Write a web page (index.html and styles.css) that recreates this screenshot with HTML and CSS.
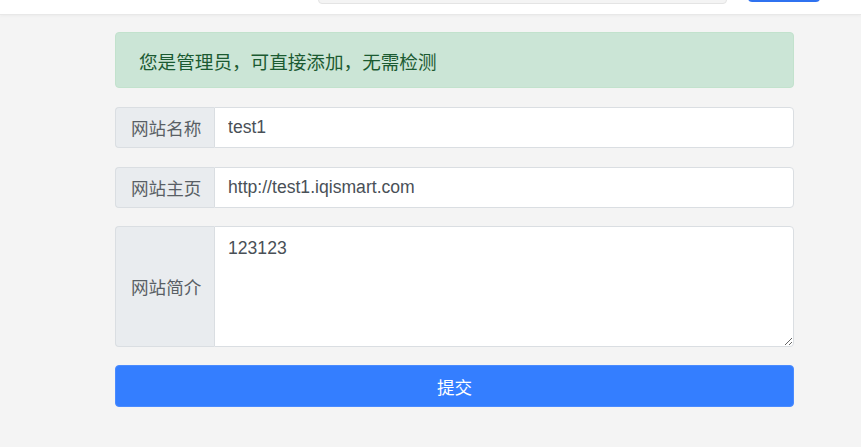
FILE: index.html
```html
<!DOCTYPE html>
<html>
<head>
  <meta charset="utf-8"/>
  <title>添加网站</title>
  <link rel="stylesheet" href="styles.css">
</head>
<body>
  <div class="topbar">
    <div class="topbar-inner">
      <div class="search-box"></div>
      <div class="search-btn"></div>
    </div>
  </div>

  <div class="page">
    <div class="alert-success">您是管理员，可直接添加，无需检测</div>

    <form id="siteForm">
      <div class="input-group">
        <span class="input-label">网站名称</span>
        <input type="text" class="form-control" value="test1">
      </div>

      <div class="input-group">
        <span class="input-label">网站主页</span>
        <input type="text" class="form-control" value="http://test1.iqismart.com">
      </div>

      <div class="input-group input-group-tall">
        <span class="input-label">网站简介</span>
        <textarea class="form-control">123123</textarea>
      </div>

      <button type="submit" class="btn-submit">提交</button>
    </form>
  </div>
</body>
</html>
```

FILE: styles.css
```css
html {
  background: #f4f4f4;
}

body {
  margin: 0;
  padding: 0;
  background: #f4f4f4;
  font-family: 'Liberation Sans', Arial, 'Noto Sans CJK SC', sans-serif;
  font-size: 17.6px;
  color: #495057;
  overflow: hidden;
}

.topbar {
  height: 14px;
  background: #fff;
  border-bottom: 1px solid #e8e8e8;
  box-shadow: 0 1px 3px rgba(0,0,0,0.04);
  overflow: hidden;
}

.topbar-inner {
  display: flex;
  align-items: flex-end;
  height: 100%;
  padding-left: 318px;
}

.search-box {
  width: 407px;
  height: 30px;
  margin-bottom: 10px;
  background: #f4f4f4;
  border: 1px solid #e4e4e4;
  border-radius: 4px;
}

.search-btn {
  width: 72px;
  height: 30px;
  margin-left: 21px;
  margin-bottom: 12px;
  background: #2f72f0;
  border-radius: 4px;
}

.page {
  width: 679px;
  margin: 17px 0 0 115px;
}

.alert-success {
  height: 56px;
  box-sizing: border-box;
  padding: 0 23px;
  display: flex;
  align-items: center;
  background: #cbe5d6;
  border: 1px solid #c2e2cd;
  border-radius: 4px;
  color: #1b5a31;
  font-size: 18.6px;
  margin-bottom: 19px;
}

.input-group {
  display: flex;
  height: 41px;
  margin-bottom: 18.5px;
}

.input-group-tall {
  height: 121px;
  margin-bottom: 18px;
}

.input-label {
  display: flex;
  align-items: center;
  width: 99px;
  box-sizing: border-box;
  padding: 0 13px 0 15px;
  background: #e9ecef;
  border: 1px solid #dadee2;
  border-right: none;
  border-radius: 4px 0 0 4px;
  color: #595f65;
  font-size: 17.6px;
  white-space: nowrap;
}

.form-control {
  flex: 1;
  min-width: 0;
  box-sizing: border-box;
  padding: 0 13px;
  background: #fff;
  border: 1px solid #dadee2;
  border-radius: 0 4px 4px 0;
  color: #495057;
  font-size: 17.6px;
  font-family: inherit;
  outline: none;
}

textarea.form-control {
  padding: 8px 13px;
  line-height: 1.5;
  resize: vertical;
}

.btn-submit {
  display: block;
  width: 100%;
  height: 42px;
  background: #347eff;
  border: 1px solid #4a8bff;
  border-radius: 4px;
  color: #fff;
  font-size: 17.6px;
  font-family: inherit;
  cursor: pointer;
}
```
